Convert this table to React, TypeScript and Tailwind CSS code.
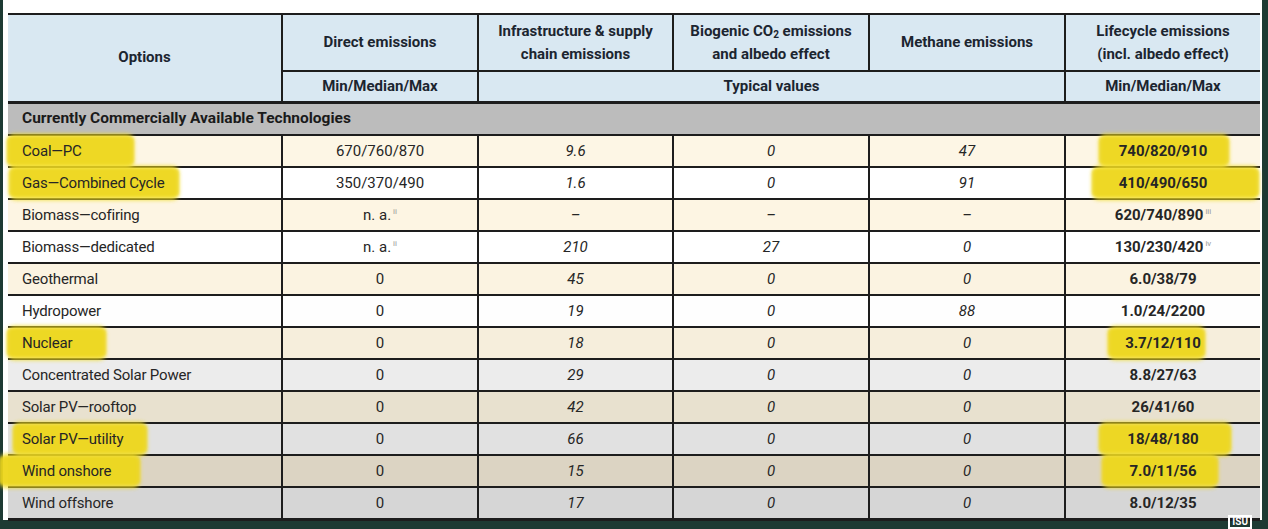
import React from "react";

type Row = {
  name: string;
  direct: React.ReactNode;
  infra: string;
  bio: string;
  meth: string;
  life: React.ReactNode;
  bg: string;
  hlName?: string;
  hlLife?: string;
};

const Sup = ({ t }: { t: string }) => (
  <sup className="text-[8px] text-[#999] ml-[2px] -top-[6px] relative align-baseline font-normal">{t}</sup>
);

const rows: Row[] = [
  { name: "Coal—PC", direct: "670/760/870", infra: "9.6", bio: "0", meth: "47", life: "740/820/910", bg: "bg-[#fdf6e5]", hlName: "left-[-15px] right-[-52px]", hlLife: "left-[-20px] right-[-22px]" },
  { name: "Gas—Combined Cycle", direct: "350/370/490", infra: "1.6", bio: "0", meth: "91", life: "410/490/650", bg: "bg-white", hlName: "left-[-13px] right-[-15px]", hlLife: "left-[-27px] right-[-52px]" },
  { name: "Biomass—cofiring", direct: <>n. a.<Sup t="ii" /></>, infra: "–", bio: "–", meth: "–", life: <>620/740/890<Sup t="iii" /></>, bg: "bg-[#fdf5e3]" },
  { name: "Biomass—dedicated", direct: <>n. a.<Sup t="ii" /></>, infra: "210", bio: "27", meth: "0", life: <>130/230/420<Sup t="iv" /></>, bg: "bg-white" },
  { name: "Geothermal", direct: "0", infra: "45", bio: "0", meth: "0", life: "6.0/38/79", bg: "bg-[#fbf3e1]" },
  { name: "Hydropower", direct: "0", infra: "19", bio: "0", meth: "88", life: "1.0/24/2200", bg: "bg-[#fefefe]" },
  { name: "Nuclear", direct: "0", infra: "18", bio: "0", meth: "0", life: "3.7/12/110", bg: "bg-[#f6eedc]", hlName: "left-[-15px] right-[-34px]", hlLife: "left-[-17px] right-[-4px]" },
  { name: "Concentrated Solar Power", direct: "0", infra: "29", bio: "0", meth: "0", life: "8.8/27/63", bg: "bg-[#ececec]" },
  { name: "Solar PV—rooftop", direct: "0", infra: "42", bio: "0", meth: "0", life: "26/41/60", bg: "bg-[#e8e1cf]" },
  { name: "Solar PV—utility", direct: "0", infra: "66", bio: "0", meth: "0", life: "18/48/180", bg: "bg-[#e1e1e1]", hlName: "left-[-9px] right-[-24px]", hlLife: "left-[-28px] right-[-32px]" },
  { name: "Wind onshore", direct: "0", infra: "15", bio: "0", meth: "0", life: "7.0/11/56", bg: "bg-[#dcd4c3]", hlName: "left-[-23px] right-[-29px]", hlLife: "left-[-27px] right-[-21px]" },
  { name: "Wind offshore", direct: "0", infra: "17", bio: "0", meth: "0", life: "8.0/12/35", bg: "bg-[#d6d6d6]" },
];

const Hl = ({ pos, children }: { pos?: string; children: React.ReactNode }) => {
  if (!pos) return <>{children}</>;
  return (
    <span className="relative inline-block">
      <span className={`absolute top-[-6px] bottom-[-6px] ${pos} bg-[#f1dc22] opacity-90 rounded-[7px] blur-[2px]`} />
      <span className={`absolute top-[-3px] bottom-[-2px] ${pos} bg-[#ecd51a] opacity-60 rounded-[4px] blur-[1px]`} />
      <span className="relative">{children}</span>
    </span>
  );
};

const vb = "border-l-2 border-[#1d1d1d]";

export default function App() {
  return (
    <div
      className="w-[1268px] h-[529px] bg-[#1d3a33] overflow-hidden flex"
      style={{ fontFamily: "Roboto, 'Noto Sans', sans-serif" }}
    >
      <div className="ml-[3px] w-[1259px] h-[520px] bg-white pt-[13px] pl-[5px] pr-[2px] relative">
        <table className="w-[1252px] table-fixed border-collapse text-[#262626]">
          <colgroup>
            <col className="w-[274px]" />
            <col className="w-[196px]" />
            <col className="w-[195px]" />
            <col className="w-[196px]" />
            <col className="w-[196px]" />
            <col className="w-[195px]" />
          </colgroup>
          <thead className="bg-[#d9e8f2] text-[#1c2530] font-bold text-[15px] leading-[23px]">
            <tr className="h-[57px] border-t-2 border-[#1d1d1d]">
              <th rowSpan={2} className="text-center font-bold">Options</th>
              <th className={`${vb} font-bold border-b-2`}>Direct emissions</th>
              <th className={`${vb} font-bold border-b-2`}>Infrastructure &amp; supply<br />chain emissions</th>
              <th className={`${vb} font-bold border-b-2`}>Biogenic CO<sub className="text-[10px] relative top-[2px] align-baseline">2</sub> emissions<br />and albedo effect</th>
              <th className={`${vb} font-bold border-b-2`}>Methane emissions</th>
              <th className={`${vb} font-bold border-b-2`}>Lifecycle emissions<br />(incl. albedo effect)</th>
            </tr>
            <tr className="h-[31px] border-b-[3px] border-[#1d1d1d]">
              <th className={`${vb} font-bold`}>Min/Median/Max</th>
              <th colSpan={3} className={`${vb} font-bold`}>Typical values</th>
              <th className={`${vb} font-bold`}>Min/Median/Max</th>
            </tr>
          </thead>
          <tbody className="text-[15px]">
            <tr className="h-[33px] bg-[#bcbcbc] border-b-2 border-[#1d1d1d]">
              <td colSpan={6} className="pl-[14px] font-bold text-[15.5px] text-[#1a1a1a]">Currently Commercially Available Technologies</td>
            </tr>
            {rows.map((r, i) => (
              <tr key={r.name} className={`h-[32px] ${r.bg} ${i < rows.length - 1 ? "border-b-2" : "border-b-[3px]"} border-[#1d1d1d]`}>
                <td className="pl-[14px] whitespace-nowrap tracking-[-0.2px]"><Hl pos={r.hlName}>{r.name}</Hl></td>
                <td className={`${vb} text-center`}>{r.direct}</td>
                <td className={`${vb} text-center italic`}>{r.infra}</td>
                <td className={`${vb} text-center italic`}>{r.bio}</td>
                <td className={`${vb} text-center italic`}>{r.meth}</td>
                <td className={`${vb} text-center font-bold`}><Hl pos={r.hlLife}>{r.life}</Hl></td>
              </tr>
            ))}
          </tbody>
        </table>
        <div className="absolute right-[10px] bottom-[-9px] border-2 border-white px-[2px] text-[10px] leading-[10px] text-white font-bold">ISU</div>
      </div>
    </div>
  );
}
